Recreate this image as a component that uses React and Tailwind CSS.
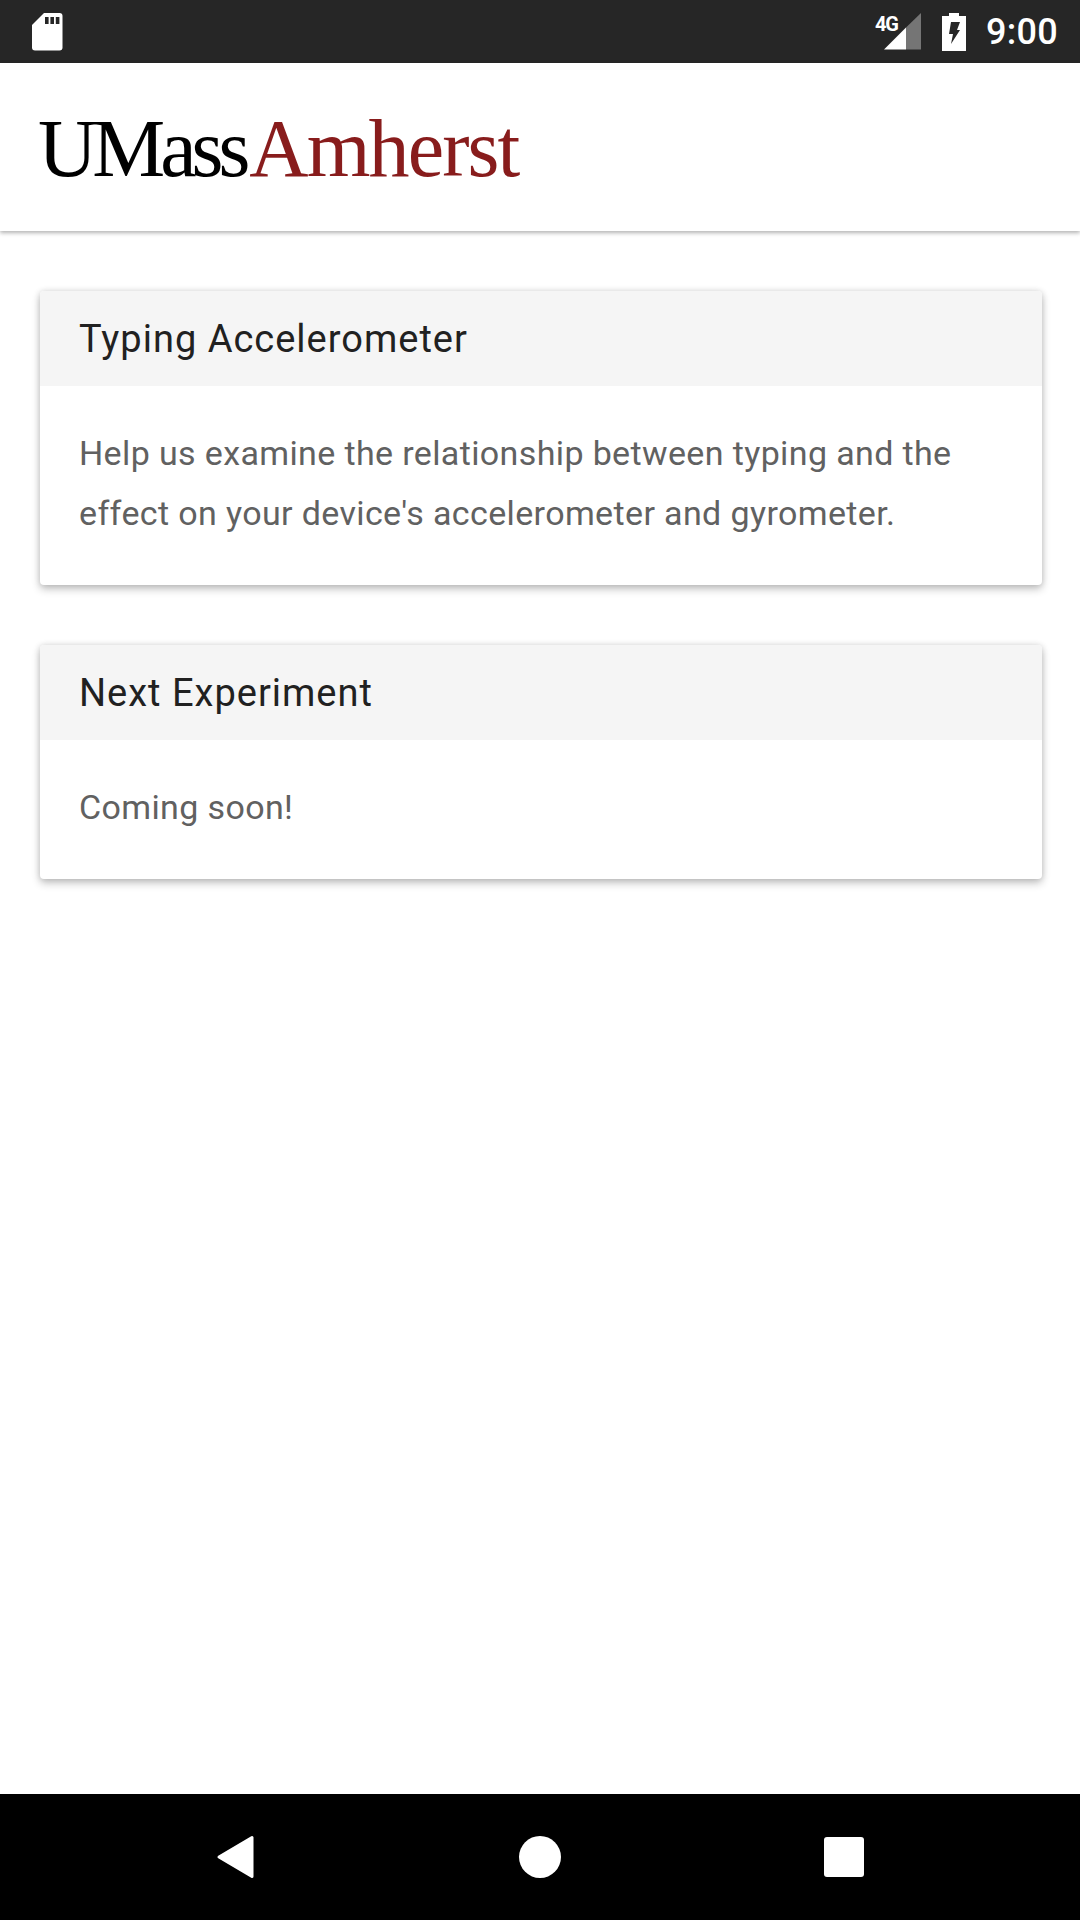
import React from "react";

function Card({ title, children }) {
  return (
    <section className="rounded-[4px] bg-white shadow-[0_4px_8px_rgba(0,0,0,0.24),0_0_6px_rgba(0,0,0,0.12)] overflow-hidden">
      <h2 className="h-[95px] bg-[#f5f5f5] pl-[39px] pr-10 flex items-center text-[38px] leading-[48px] tracking-[1px] text-[#212121] font-normal">{title}</h2>
      <div className="pl-[39px] pr-10 pt-[37px] pb-[42px] text-[34px] leading-[60px] tracking-[0.37px] text-[#616161]">{children}</div>
    </section>
  );
}

export default function App() {
  return (
    <div className="w-[1080px] h-[1920px] flex flex-col bg-white overflow-hidden font-['Roboto',sans-serif]">
      <div className="h-[63px] shrink-0 bg-[#262626] flex items-center justify-between pl-[31px] pr-[22px] text-white">
        <svg width="32" height="38" viewBox="0 0 32 38">
          <path d="M13 0H28.5Q31.5 0 31.5 3V34.5Q31.5 37.5 28.5 37.5H4Q1 37.5 1 34.5V12Z" fill="#fff" />
          <rect x="14" y="4" width="3.6" height="7" fill="#262626" />
          <rect x="19.4" y="4" width="3.6" height="7" fill="#262626" />
          <rect x="24.8" y="4" width="3.6" height="7" fill="#262626" />
        </svg>
        <div className="flex items-center">
          <div className="relative w-[37px] h-[37px] mr-[21px]">
            <span className="absolute left-[-9px] top-[-1px] text-[20px] leading-[24px] font-bold tracking-[-1.2px]">4G</span>
            <svg width="37" height="37" viewBox="0 0 37 37" className="absolute inset-0">
              <path d="M0 36.5L22 14.5V36.5Z" fill="#fff" />
              <path d="M22 14.5L37 0V36.5H22Z" fill="#757575" />
            </svg>
          </div>
          <svg width="24" height="38" viewBox="0 0 24 38" className="mr-[20px]">
            <path d="M7 0H17V3H24V38H0V3H7Z" fill="#fff" />
            <path d="M9 9H18L15 17H18L9 31L11 21H7Z" fill="#262626" />
          </svg>
          <span className="text-[36px] leading-[44px] tracking-[0.3px] font-medium">9:00</span>
        </div>
      </div>

      <header className="h-[168px] shrink-0 bg-white flex items-center pl-[38px] shadow-[0_2px_4px_rgba(0,0,0,0.3)] z-10">
        <span className="font-['Liberation_Serif',serif] text-[82px] leading-[100px] mt-[3px] text-black whitespace-nowrap">
          <span className="tracking-[-5px]">UMass</span>
          <span className="text-[#881c1c] ml-[4px] tracking-[-1.9px]">Amherst</span>
        </span>
      </header>

      <main className="flex-1 flex flex-col gap-[60px] pt-[60px] pl-[40px] pr-[38px]">
        <Card title="Typing Accelerometer">
          Help us examine the relationship between typing and the effect on your device's accelerometer and gyrometer.
        </Card>
        <Card title="Next Experiment">Coming soon!</Card>
      </main>

      <nav className="h-[126px] shrink-0 bg-black relative">
        <svg className="absolute left-[216px] top-[41px]" width="40" height="44" viewBox="0 0 40 44">
          <path d="M36 2.5V41.5L3 22Z" fill="#fff" stroke="#fff" strokeWidth="3" strokeLinejoin="round" />
        </svg>
        <div className="absolute left-[519px] top-[42px] w-[42px] h-[42px] rounded-full bg-white" />
        <div className="absolute left-[824px] top-[43px] w-[40px] h-[40px] rounded-[3px] bg-white" />
      </nav>
    </div>
  );
}
